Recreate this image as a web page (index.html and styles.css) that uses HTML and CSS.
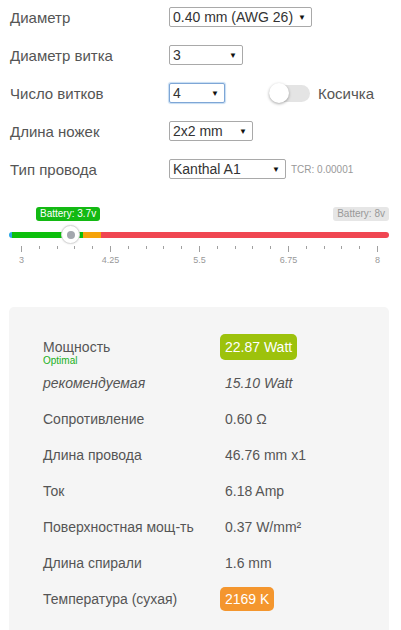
FILE: index.html
```html
<!DOCTYPE html>
<html lang="ru">
<head>
<meta charset="utf-8">
<title>Coil calculator</title>
<link rel="stylesheet" href="styles.css">
</head>
<body>
<div class="form">
  <div class="row">
    <div class="label">Диаметр</div>
    <div class="select w-diam"><span>0.40 mm (AWG 26)</span><span class="arrow">▼</span></div>
  </div>
  <div class="row">
    <div class="label">Диаметр витка</div>
    <div class="select w-inner"><span>3</span><span class="arrow">▼</span></div>
  </div>
  <div class="row">
    <div class="label">Число витков</div>
    <div class="select w-wraps focus"><span>4</span><span class="arrow">▼</span></div>
    <div class="toggle"><div class="knob"></div></div>
    <div class="toggle-label">Косичка</div>
  </div>
  <div class="row">
    <div class="label">Длина ножек</div>
    <div class="select w-legs"><span>2x2 mm</span><span class="arrow">▼</span></div>
  </div>
  <div class="row">
    <div class="label">Тип провода</div>
    <div class="select w-wire"><span>Kanthal A1</span><span class="arrow">▼</span></div>
    <div class="tcr">TCR: 0.00001</div>
  </div>
</div>

<div class="slider">
  <div class="tips">
    <div class="tip tip-from">Battery: 3.7v</div>
    <div class="tip tip-max">Battery: 8v</div>
  </div>
  <div class="bar">
    <div class="seg seg-blue"></div>
    <div class="seg seg-green"></div>
    <div class="seg seg-orange"></div>
    <div class="seg seg-red"></div>
  </div>
  <div class="handle"><div class="dot"></div></div>
  <div class="ticks">
    <i class="big"></i><i></i><i></i><i></i><i></i>
    <i class="big"></i><i></i><i></i><i></i><i></i>
    <i class="big"></i><i></i><i></i><i></i><i></i>
    <i class="big"></i><i></i><i></i><i></i><i></i>
    <i class="big"></i>
  </div>
  <div class="tick-labels">
    <span>3</span><span>4.25</span><span>5.5</span><span>6.75</span><span>8</span>
  </div>
</div>

<div class="panel">
  <div class="prow">
    <div class="pl">Мощность<div class="sub">Optimal</div></div>
    <div class="pv"><span class="badge badge-green">22.87 Watt</span></div>
  </div>
  <div class="prow it">
    <div class="pl">рекомендуемая</div>
    <div class="pv">15.10 Watt</div>
  </div>
  <div class="prow">
    <div class="pl">Сопротивление</div>
    <div class="pv">0.60 Ω</div>
  </div>
  <div class="prow">
    <div class="pl">Длина провода</div>
    <div class="pv">46.76 mm x1</div>
  </div>
  <div class="prow">
    <div class="pl">Ток</div>
    <div class="pv">6.18 Amp</div>
  </div>
  <div class="prow">
    <div class="pl">Поверхностная мощ-ть</div>
    <div class="pv">0.37 W/mm²</div>
  </div>
  <div class="prow">
    <div class="pl">Длина спирали</div>
    <div class="pv">1.6 mm</div>
  </div>
  <div class="prow">
    <div class="pl">Температура (сухая)</div>
    <div class="pv"><span class="badge badge-orange">2169 K</span></div>
  </div>
</div>
</body>
</html>
```
FILE: styles.css
```css
html, body {
  margin: 0;
  padding: 0;
  background: #fff;
}
body {
  font-family: "Liberation Sans", Arial, sans-serif;
  color: #555;
  width: 401px;
  overflow: hidden;
}

/* form */
.form {
  padding: 7px 0 0 10px;
  display: flow-root;
}
.row {
  display: flex;
  align-items: center;
  height: 20px;
  margin-bottom: 18px;
}
.label {
  width: 159px;
  flex: none;
  font-size: 15px;
  color: #555;
}
.select {
  display: flex;
  align-items: center;
  justify-content: space-between;
  box-sizing: border-box;
  height: 20px;
  border: 1px solid #a9a9a9;
  border-radius: 2px;
  padding: 0 5px 0 3px;
  font-size: 14px;
  color: #333;
  background: #fff;
  flex: none;
}
.select.focus {
  border-color: #7ea6d6;
  box-shadow: 0 0 1px 1px #c5dcf2;
}
.arrow {
  font-size: 8px;
  color: #111;
}
.w-diam { width: 143px; }
.w-inner { width: 74px; }
.w-wraps { width: 56px; }
.w-legs { width: 84px; }
.w-wire { width: 117px; }

.toggle {
  width: 41px;
  height: 17px;
  border-radius: 9px;
  background: #e4e4e4;
  margin-left: 44px;
  display: flex;
  align-items: center;
}
.knob {
  width: 20px;
  height: 20px;
  border-radius: 50%;
  background: #fff;
  box-shadow: 0 1px 3px rgba(0, 0, 0, 0.35);
}
.toggle-label {
  margin-left: 8px;
  font-size: 15px;
  color: #555;
}
.tcr {
  margin-left: 5px;
  font-size: 10px;
  color: #999;
}

/* slider */
.slider {
  position: relative;
  width: 380px;
  margin: 0 0 0 9px;
  padding-top: 10px;
}
.tips {
  display: flex;
  justify-content: space-between;
  height: 14px;
}
.tip {
  font-size: 10px;
  line-height: 14px;
  padding: 0 4px;
  border-radius: 3px;
}
.tip-from {
  margin-left: 27px;
  background: #13b913;
  color: #fff;
}
.tip-max {
  background: #e6e6e6;
  color: #999;
}
.bar {
  display: flex;
  height: 6px;
  margin-top: 11px;
  border-radius: 3px;
  overflow: hidden;
}
.seg-blue { width: 3px; background: #2aa7e6; }
.seg-green { width: 71px; background: #0cbf0c; }
.seg-orange { width: 18px; background: #f5a30a; }
.seg-red { flex: 1; background: #f04652; }
.handle {
  position: absolute;
  left: 52px;
  top: 28px;
  width: 17px;
  height: 17px;
  border-radius: 50%;
  background: #fff;
  border: 1px solid #d9d9d9;
  box-shadow: 0 0 2px rgba(0, 0, 0, 0.15);
  display: flex;
  align-items: center;
  justify-content: center;
}
.dot {
  width: 8px;
  height: 8px;
  border-radius: 50%;
  background: #a3a7ae;
}
.ticks {
  display: flex;
  justify-content: space-between;
  align-items: flex-start;
  width: 357px;
  margin: 8px 0 0 12px;
  height: 6px;
}
.ticks i {
  display: block;
  width: 1px;
  height: 3px;
  background: #a0a0a0;
}
.ticks i.big {
  height: 6px;
}
.tick-labels {
  display: flex;
  justify-content: space-between;
  width: 357px;
  margin: 2px 0 0 12px;
  font-size: 9px;
  line-height: 12px;
  color: #999;
}
.tick-labels span {
  width: 1px;
  display: flex;
  justify-content: center;
  white-space: nowrap;
}

/* results panel */
.panel {
  margin: 41px 0 0 9px;
  width: 380px;
  background: #f5f5f5;
  border-radius: 5px;
  padding: 22px 0 22px 34px;
  box-sizing: border-box;
}
.prow {
  display: grid;
  grid-template-columns: 182px 1fr;
  align-items: center;
  height: 36px;
  font-size: 14px;
  color: #555;
}
.prow.it {
  font-style: italic;
}
.pl {
  line-height: 18px;
}
.sub {
  font-size: 10px;
  line-height: 10px;
  margin-bottom: -10px;
  color: #19b019;
}
.pv {
  line-height: 18px;
  color: #555;
}
.badge {
  display: inline-block;
  margin-left: -5px;
  padding: 4px 5px;
  border-radius: 5px;
  color: #fff;
  line-height: 18px;
}
.badge-green {
  background: #9dc20c;
}
.badge-orange {
  background: #f4962e;
  padding: 3px 5px;
}
```
